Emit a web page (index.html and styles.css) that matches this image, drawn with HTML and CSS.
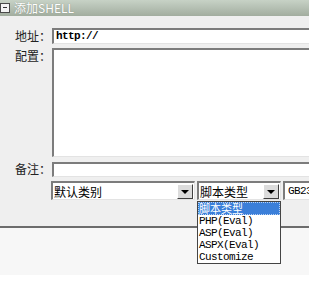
FILE: index.html
```html
<!DOCTYPE html>
<html lang="zh-CN">

<head>
  <meta charset="UTF-8">
  <meta name="viewport" content="width=device-width, initial-scale=1.0">
  <link rel="stylesheet" href="styles.css">
  <title>添加SHELL</title>
</head>

<body>
  <div class="win">
    <div class="titleBar">
      <span class="titleIco"></span>
      <span class="titleText">添加SHELL</span>
    </div>

    <div class="form">
      <div class="row">
        <div class="label">地址：</div>
        <div class="field addr mono">http://</div>
      </div>
      <div class="row">
        <div class="label">配置：</div>
        <div class="field config"></div>
      </div>
      <div class="row">
        <div class="label">备注：</div>
        <div class="field note"></div>
      </div>
      <div class="row selRow">
        <div class="select selType">
          <span class="selText">默认类别</span>
          <span class="arrow"></span>
        </div>
        <div class="select selScript">
          <span class="selText">脚本类型</span>
          <span class="arrow"></span>
          <!-- 展开的下拉列表 -->
          <ul class="dropList">
            <li class="active">脚本类型</li>
            <li class="mono">PHP(Eval)</li>
            <li class="mono">ASP(Eval)</li>
            <li class="mono">ASPX(Eval)</li>
            <li class="mono">Customize</li>
          </ul>
        </div>
        <div class="field charset mono">GB23</div>
      </div>
    </div>

    <div class="footer"></div>
  </div>
</body>

</html>
```

FILE: styles.css
```css
* {
  margin: 0;
  padding: 0;
  list-style: none;
  box-sizing: border-box;
}

body {
  width: 309px;
  height: 297px;
  overflow: hidden;
  background-color: #fff;
  font-family: "Noto Sans CJK SC", "Liberation Sans", sans-serif;
  font-size: 12px;
  color: #000;
}

.win {
  width: 309px;
  overflow: hidden;
}

.mono {
  font-family: "Liberation Mono", "Noto Sans CJK SC", monospace;
  font-size: 11px;
  letter-spacing: -0.6px;
}

/* 标题栏 */
.titleBar {
  height: 16px;
  display: flex;
  align-items: center;
  background: linear-gradient(#c7d2c6, #a2ad9f);
}

.titleIco {
  width: 10px;
  height: 10px;
  margin-right: 4px;
  border: 1px solid #4a4a4a;
  background-color: #f4f4f4;
  position: relative;
}

.titleIco::after {
  content: "";
  position: absolute;
  left: 2px;
  top: 3px;
  width: 4px;
  height: 1px;
  background-color: #333;
}

.titleText {
  color: #fff;
  line-height: 16px;
  text-shadow: 0 0 1px #7d877b;
}

/* 表单 */
.form {
  width: 420px;
  height: 210px;
  padding: 12px 0 0 15px;
  background-color: #efefef;
  display: flex;
  flex-direction: column;
  gap: 4px;
}

.row {
  display: flex;
}

.label {
  width: 37px;
  color: #222;
  line-height: 16px;
}

.field {
  flex: 1;
  background-color: #fff;
  border-style: solid;
  border-width: 2px 1px 1px 2px;
  border-color: #7c7c7c #e3e3e3 #e3e3e3 #7c7c7c;
  line-height: 12px;
  padding-left: 2px;
}

.addr {
  height: 16px;
  font-weight: bold;
}

.config {
  height: 109px;
}

.note {
  height: 15px;
  margin-top: 1px;
}

.selRow {
  margin-left: 36px;
  gap: 2px;
  height: 19px;
}

.select {
  position: relative;
  height: 19px;
  background-color: #fff;
  border-style: solid;
  border-width: 2px 1px 1px 2px;
  border-color: #7c7c7c #e3e3e3 #e3e3e3 #7c7c7c;
  display: flex;
  align-items: center;
}

.selType {
  width: 144px;
}

.selScript {
  width: 84px;
}

.selText {
  flex: 1;
  padding-left: 1px;
  line-height: 15px;
}

.arrow {
  width: 16px;
  height: 15px;
  margin-right: 1px;
  background-color: #dcdcdc;
  border: 1px solid;
  border-color: #fff #404040 #404040 #fff;
  position: relative;
}

.arrow::after {
  content: "";
  position: absolute;
  left: 3px;
  top: 5px;
  border-left: 4px solid transparent;
  border-right: 4px solid transparent;
  border-top: 4px solid #000;
}

.charset {
  height: 19px;
  line-height: 16px;
  padding-left: 3px;
}

/* 下拉列表 */
.dropList {
  position: absolute;
  left: -2px;
  top: 18px;
  width: 84px;
  border: 1px solid #444;
  background-color: #fff;
  z-index: 2;
}

.dropList li {
  height: 12px;
  line-height: 12px;
  padding-left: 1px;
  white-space: nowrap;
}

.dropList .active {
  height: 13px;
  line-height: 13px;
  font-size: 11px;
  color: #fff;
  background-color: #3b7fd9;
  outline: 1px dotted #b8d2f4;
  outline-offset: -1px;
}

/* 底部 */
.footer {
  height: 49px;
  border-top: 2px solid #6c6c6c;
  background-color: #f7f7f7;
}
```
